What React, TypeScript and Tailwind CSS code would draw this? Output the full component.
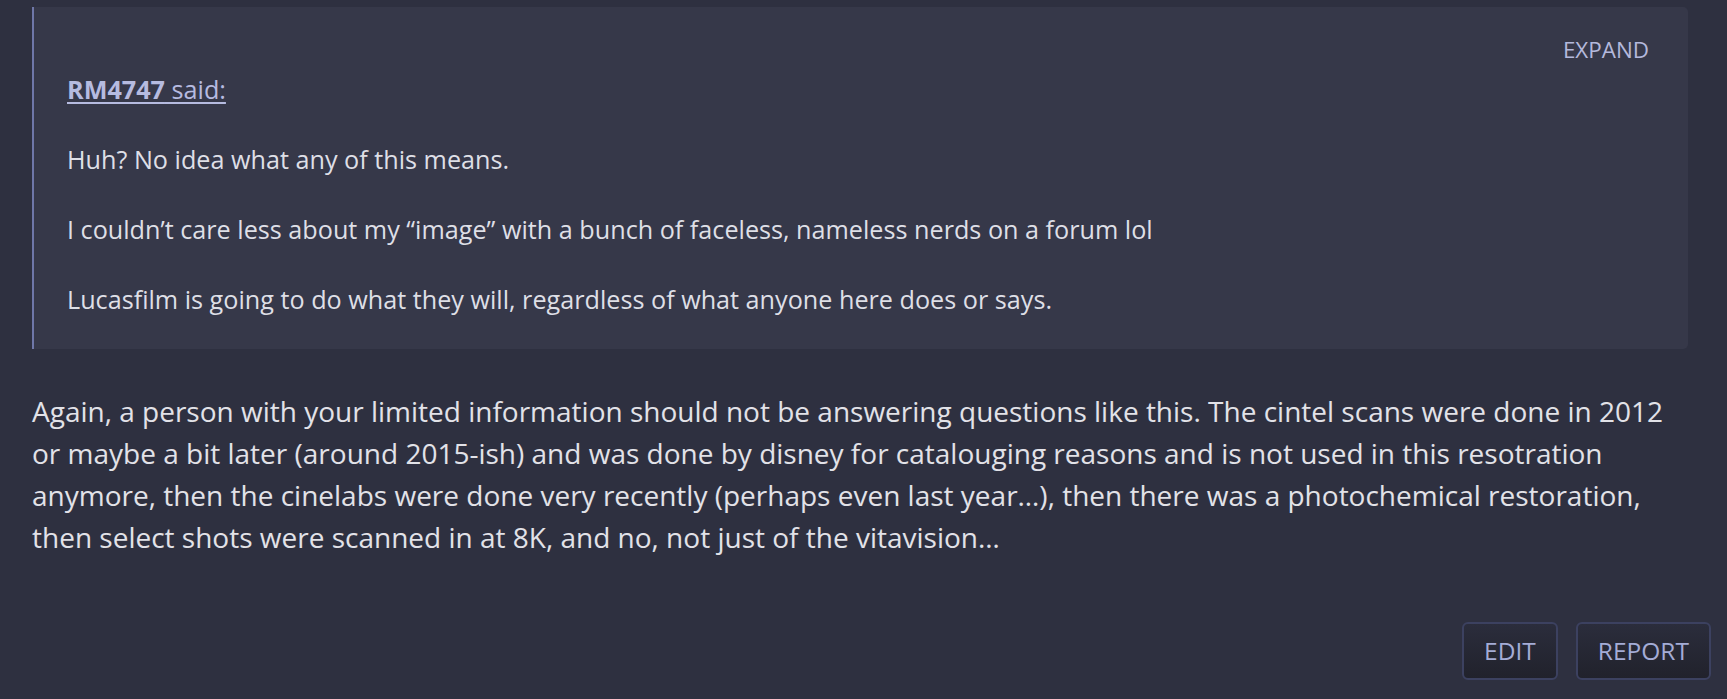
import React from "react";

const font = { fontFamily: '"Open Sans", "Noto Sans", sans-serif' };

function Quote() {
  return (
    <div className="mr-[23px] rounded-r-[5px] border-l-2 border-[#6f77a8] bg-[#363849] pl-[33px] pr-[39px] pt-[29px] pb-[32px]">
      <div className="flex justify-end">
        <button className="text-[22.4px] leading-[28px] uppercase text-[#b4b9dc]">Expand</button>
      </div>
      <div className="mt-[8px] text-[25.2px] leading-[35px] text-[#b6bbe0]">
        <a href="#" className="underline underline-offset-[3px] decoration-[1.5px]">
          <span className="font-bold">RM4747</span> said:
        </a>
      </div>
      <div className="mt-[35px] text-[25.2px] leading-[35px] text-[#dedfe6]">
        Huh? No idea what any of this means.
        <br />
        <br />
        I couldn’t care less about my “image” with a bunch of faceless, nameless nerds on a forum lol
        <br />
        <br />
        Lucasfilm is going to do what they will, regardless of what anyone here does or says.
      </div>
    </div>
  );
}

export default function App() {
  return (
    <div className="min-h-screen bg-[#2e3040] pt-[7px] pl-[32px] pr-[16px]" style={font}>
      <Quote />
      <div className="mt-[41px] pr-[23px] text-[28px] leading-[42px] text-[#e2e2e8]">
        Again, a person with your limited information should not be answering questions like this. The cintel scans were done in 2012 or maybe a bit later (around 2015-ish) and was done by disney for catalouging reasons and is not used in this resotration anymore, then the cinelabs were done very recently (perhaps even last year…), then there was a photochemical restoration, then select shots were scanned in at 8K, and no, not just of the vitavision…
      </div>
      <div className="mt-[64px] flex justify-end gap-[18px]">
        <button className="h-[58px] rounded-[6px] border-2 border-[#3c4160] bg-gradient-to-b from-[#2b2d3c] to-[#21222c] px-[20px] text-[24.5px] uppercase text-[#a4acd6]">
          Edit
        </button>
        <button className="h-[58px] rounded-[6px] border-2 border-[#3c4160] bg-gradient-to-b from-[#2b2d3c] to-[#21222c] px-[20px] text-[24.5px] uppercase text-[#a4acd6]">
          Report
        </button>
      </div>
    </div>
  );
}
